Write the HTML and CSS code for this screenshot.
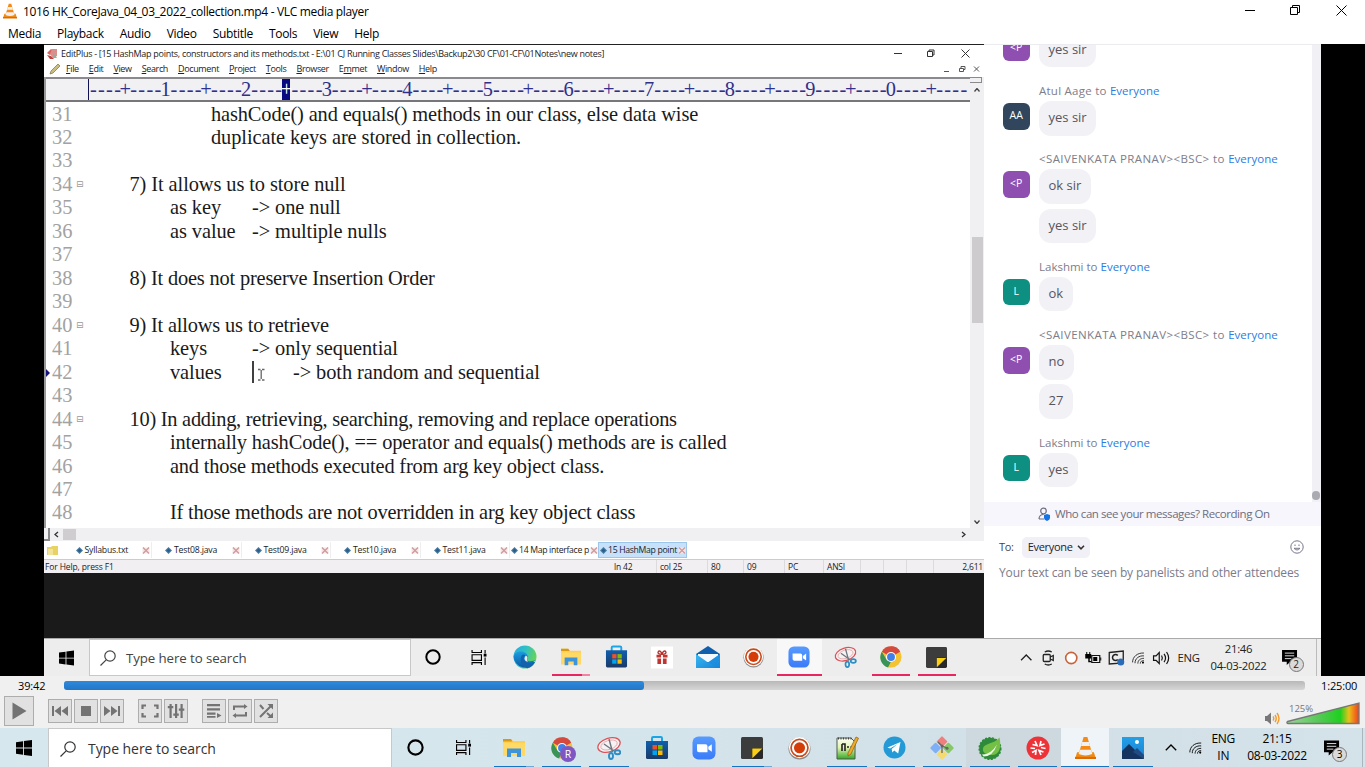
FILE: index.html
```html
<!DOCTYPE html>
<html lang="en">
<head>
<meta charset="utf-8">
<title>1016 HK_CoreJava_04_03_2022_collection.mp4 - VLC media player</title>
<link rel="stylesheet" href="styles.css">
</head>
<body>
<svg class="defs" width="0" height="0">
  <defs>
    <linearGradient id="vol" x1="0" x2="1"><stop offset="0" stop-color="#9ad49a"/><stop offset=".45" stop-color="#55c955"/><stop offset=".74" stop-color="#1fd01f"/><stop offset=".86" stop-color="#e8c21c"/><stop offset=".95" stop-color="#f36a1a"/><stop offset="1" stop-color="#e8431a"/></linearGradient>
    <linearGradient id="edgeA" x1="0" y1="0" x2="1" y2=".4"><stop offset="0" stop-color="#27a9e0"/><stop offset=".5" stop-color="#2fc0c6"/><stop offset="1" stop-color="#67d35a"/></linearGradient>
    <linearGradient id="edgeB" x1="0" y1="0" x2="0" y2="1"><stop offset="0" stop-color="#1b9de2"/><stop offset="1" stop-color="#0c59a4"/></linearGradient>
    <linearGradient id="storeG" x1="0" y1="0" x2="0" y2="1"><stop offset="0" stop-color="#0f5fae"/><stop offset="1" stop-color="#1a3a66"/></linearGradient>
    <linearGradient id="zoomG" x1="0" y1="0" x2="0" y2="1"><stop offset="0" stop-color="#579bff"/><stop offset="1" stop-color="#3a7bf8"/></linearGradient>
    <linearGradient id="mailG" x1="0" y1="0" x2="1" y2="1"><stop offset="0" stop-color="#3ab8f2"/><stop offset="1" stop-color="#1583d8"/></linearGradient>
    <linearGradient id="photoG" x1="0" y1="0" x2="0" y2="1"><stop offset="0" stop-color="#22a0e8"/><stop offset="1" stop-color="#1b7fd0"/></linearGradient>
    <linearGradient id="nppG" x1="0" y1="0" x2="0" y2="1"><stop offset="0" stop-color="#fbfdf5"/><stop offset=".45" stop-color="#e3f3b4"/><stop offset="1" stop-color="#35a923"/></linearGradient>
    <symbol id="win" viewBox="0 0 16 16"><path d="M0 2.2 7 1.2v6.4H0zM7.9 1.1 16 0v7.6H7.9zM0 8.4h7v6.4L0 13.8zM7.9 8.4H16V16l-8.1-1.1z"/></symbol>
    <symbol id="search" viewBox="0 0 16 16"><g fill="none" stroke="currentColor" stroke-width="1.2"><circle cx="10" cy="6" r="5.2"/><path d="M6.2 9.8.5 15.5"/></g></symbol>
    <symbol id="ring" viewBox="0 0 16 16"><circle cx="8" cy="8" r="6.7" fill="none" stroke="currentColor" stroke-width="2"/></symbol>
    <symbol id="taskview" viewBox="0 0 16 16"><path d="M.6 0v2.6h10V0M.6 16v-2.6h10V16M.6 5h10v6H.6zM14.5 0v3.8M14.5 8v8" fill="none" stroke="currentColor" stroke-width="1.2"/><path d="M13 4h3v3h-3z"/></symbol>
    <symbol id="edge" viewBox="0 0 24 24"><circle cx="12" cy="12" r="11.5" fill="url(#edgeA)"/><path d="M.6 11.5C2 7 6 6 9 6.6c4.500.8 6 4 6 6 0 1-.6 1.500-1 2.200-.5 1 3 2.300 7.500.7.8-.3 1.200.3.6 1.200A11.500 11.500 0 0 1 .6 11.500z" fill="url(#edgeB)"/><path d="M24 12.500c0 3-2.500 4.500-5 4.500l3.200 0z" fill="#ececec"/><path d="M9 10c-2.500 4-1.500 11 5.200 13.200A11 11 0 0 0 22 17c-5 2.700-9.500 1-10.800-1.700C10 13 11 11 12.500 10.500 11 9 9.800 9.200 9 10z" fill="#1461ac"/><path d="M12.800 10.800c1.600.5 2 2 1.400 3.200-.5 1-.3 2 1.200 2.500-3 .5-5.400-2.500-2.600-5.700z" fill="#ececec"/></symbol>
    <symbol id="folder" viewBox="0 0 22 20"><path d="M0 1h8l2 2h12v15H0z" fill="#ffcf52"/><path d="M0 1h8l1.500 2.500H0z" fill="#d99a11"/><path d="M0 5h22v13H0z" fill="#ffd966"/><path d="M4 10.500h14V19h-4v-4H8v4H4z" fill="#3d94da"/></symbol>
    <symbol id="store" viewBox="0 0 24 24"><path d="M7 6V2.200C7 1.500 7.500 1 8.200 1h7.600c.7 0 1.200.5 1.200 1.200V6" fill="none" stroke="#1aa5e8" stroke-width="2"/><path d="M1 5h22v16.500A1.500 1.500 0 0 1 21.500 23h-19A1.500 1.500 0 0 1 1 21.500z" fill="url(#storeG)"/><path d="M7.500 9H12v4.500H7.500z" fill="#f25022"/><path d="M13 9h4.500v4.500H13z" fill="#7fba00"/><path d="M7.500 14.500H12V19H7.500z" fill="#00a4ef"/><path d="M13 14.500h4.500V19H13z" fill="#ffb900"/></symbol>
    <symbol id="gift" viewBox="0 0 24 24"><path d="M0 0h24v24H0z" fill="#fff"/><path d="M6 9h12v3H6zM7 13h10v6H7z" fill="#c13531"/><path d="M11 9h2v10h-2z" fill="#fff"/><path d="M12 8.500C8 8.500 7 7 8 5.500s3.500 0 4 3c.5-3 3-4.500 4-3s0 3-4 3z" fill="none" stroke="#b5302c" stroke-width="1.500"/></symbol>
    <symbol id="mail" viewBox="0 0 24 22"><path d="M0 8 12 0l12 8v13H0z" fill="#0f5fae"/><path d="M2 8h20v8H2z" fill="#f4f9ff"/><path d="M0 8l12 8.500L24 8v14H0z" fill="url(#mailG)"/><path d="M12 16.500 24 8v14z" fill="#1a8be0" opacity=".6"/></symbol>
    <symbol id="record" viewBox="0 0 24 24"><circle cx="12" cy="12.500" r="11.500" fill="#8c8987"/><circle cx="12" cy="11.600" r="11" fill="#fff"/><circle cx="12" cy="11.800" r="8.800" fill="#fff" stroke="#c84b1d" stroke-width="1.800"/><circle cx="12" cy="11.800" r="5.800" fill="#d43d08"/></symbol>
    <symbol id="zoomapp" viewBox="0 0 24 24"><rect x=".5" y=".5" width="23" height="23" rx="6" fill="url(#zoomG)"/><path d="M5 8.200h8.500a2 2 0 0 1 2 2v6H7a2 2 0 0 1-2-2zM16.300 10.800l3.500-2.500v7.500l-3.500-2.500z" fill="#fff"/></symbol>
    <symbol id="snip" viewBox="0 0 24 24"><ellipse cx="12" cy="9" rx="11.500" ry="6.800" transform="rotate(-18 12 9)" fill="#f6f2f3" stroke="#dc5258" stroke-width="1.300"/><ellipse cx="12" cy="9" rx="8.500" ry="4.500" transform="rotate(-18 12 9)" fill="none" stroke="#e0a3a6" stroke-width=".8"/><path d="M12 3l3.500 13M7 8l10 7" stroke="#6c7780" stroke-width="1.400"/><g fill="none" stroke="#2c8ec4" stroke-width="1.900"><ellipse cx="14" cy="20" rx="2" ry="3"/><ellipse cx="20.500" cy="16.300" rx="2.800" ry="2"/></g></symbol>
    <symbol id="chrome" viewBox="0 0 24 24"><circle cx="12" cy="12" r="11.500" fill="#f4c334"/><path d="M12 12 2 6.200A11.500 11.500 0 0 1 22 6.200z" fill="#d54a3e"/><path d="M12 .5A11.500 11.500 0 0 1 22 6.400H12z" fill="#d54a3e"/><path d="M2 6.300 7.200 15 12 17.500l-3 6A11.500 11.500 0 0 1 2 6.300z" fill="#3a9457"/><path d="m9 23 5-9 3-2-5 11.500z" fill="#f4c334"/><circle cx="12" cy="12" r="5.500" fill="#fff"/><circle cx="12" cy="12" r="4.300" fill="#4180e8"/></symbol>
    <symbol id="sticky" viewBox="0 0 22 22"><path d="M0 1.500Q0 0 1.500 0h19Q22 0 22 1.500V12L12 22H1.500Q0 22 0 20.500z" fill="#3c3c3c"/><path d="M11 22V11h11v9.500Q22 22 20.500 22z" fill="#292929"/><path d="M11.300 11.500h10L11.300 21.300z" fill="#fbd012"/></symbol>
    <symbol id="cone" viewBox="0 0 20 22"><path d="M2 15h16l2 6.500H0z" fill="#f28a12"/><path d="M0 19.500h20v2H0z" fill="#d96c08"/><path d="M8.200.5h3.600l4.700 16.300q-6.500 2.500-13 0z" fill="#f58b16"/><path d="M6.800 5.200h6.400l1.100 3.900H5.700zM4.700 12.700h10.600l1.200 4.100q-6.500 2.500-13 0z" fill="#eef0f1"/></symbol>
    <symbol id="wifi" viewBox="0 0 16 16"><g fill="none" stroke="currentColor" stroke-width="1.100"><path d="M1 14C1 7 7 2 15 2.500M4 15c0-6 5-9.500 11-9M7.500 15.500c0-4 3-6.500 7.500-6.500M10.500 15.500c0-2.500 2-4 4.500-3.500"/></g><circle cx="13.800" cy="14.300" r="1.300"/></symbol>
    <symbol id="caret" viewBox="0 0 12 7"><path d="M.8 6.300 6 1l5.200 5.300" fill="none" stroke="currentColor" stroke-width="1.300"/></symbol>
    <symbol id="notice" viewBox="0 0 17 16"><path d="M0 0h16v12.500H9L5 16v-3.500H0z"/><path d="M3 3.300h10M3 6.200h10M3 9.200h7" stroke="#e6e9eb" stroke-width="1"/></symbol>
    <symbol id="dot" viewBox="0 0 7 7"><path d="M3.500 0 7 3.500 3.500 7 0 3.500z" fill="#4a7ba2"/><path d="M3.500 1.500 5.500 3.500 3.500 5.500 1.500 3.500z" fill="#2a5e88"/></symbol>
    <symbol id="cross" viewBox="0 0 8 7"><path d="M.5.500h7v6h-7z" fill="#f4e6e6"/><path d="m1 .5 6 6m0-6-6 6" stroke="#cf989b" stroke-width="1.200"/></symbol>
  </defs>
</svg>

<header class="titlebar">
  <svg class="app-cone" width="14" height="16"><use href="#cone"/></svg>
  <span class="window-title">1016 HK_CoreJava_04_03_2022_collection.mp4 - VLC media player</span>
  <svg class="window-buttons" width="102" height="12" viewBox="0 0 102 12" fill="none" stroke="#000"><path d="M0 6.500h10M45.500 3.500h7v7h-7zM47.500 3.500v-2h7v7h-2M91.500 1.500l10 10m0-10-10 10"/></svg>
</header>
<nav class="menubar"><span>Media</span><span>Playback</span><span>Audio</span><span>Video</span><span>Subtitle</span><span>Tools</span><span>View</span><span>Help</span></nav>

<main class="video">
  <div class="desktop">
    <div class="workspace">
      <section class="share">
        <div class="editor">
          <div class="ed-title">
            <svg width="12" height="11" viewBox="0 0 12 11"><path d="M1 5 5 1l3 2-4 4z" fill="#d9605c"/><path d="M6 1h5v7l-4 2-3-4z" fill="#d98f8a"/><path d="M1 7l4 1 3 3H4z" fill="#b8433f"/><path d="M8 6l3 4H7z" fill="#8ab39a"/></svg>
            <span>EditPlus - [15 HashMap points, constructors and its methods.txt - E:\01 CJ Running Classes Slides\Backup2\30 CF\01-CF\01Notes\new notes]</span>
            <svg class="ed-buttons" width="76" height="9" viewBox="0 0 76 9" fill="none" stroke="#333"><path d="M0 4.500h8M33.500 2.500h5v5h-5zM35 2.500v-1.500h5V6h-1.500M67.500.500l8 8m0-8-8 8"/></svg>
          </div>
          <div class="ed-menu">
            <svg width="12" height="12" viewBox="0 0 12 12"><path d="M1 11 2 8 9 1l2 2-7 7z" fill="#c9bd82" stroke="#8a8055" stroke-width=".8"/></svg>
            <span><u>F</u>ile</span><span><u>E</u>dit</span><span><u>V</u>iew</span><span><u>S</u>earch</span><span><u>D</u>ocument</span><span><u>P</u>roject</span><span><u>T</u>ools</span><span><u>B</u>rowser</span><span>E<u>m</u>met</span><span><u>W</u>indow</span><span><u>H</u>elp</span>
            <svg class="mdi" width="36" height="8" viewBox="0 0 36 8" fill="none" stroke="#555"><path d="M0 6.500h5M15.500 3.500h4v3h-4zM17 3V1.500h4v3h-1M30 1.500l5 5m0-5-5 5"/></svg>
          </div>
          <div class="ed-main">
            <div class="ed-left">
              <div class="ruler"><span class="ruler-gutter"></span><i>----</i><b>+</b><i>----</i><b>1</b><i>----</i><b>+</b><i>----</i><b>2</b><i>----</i><b class="on">+</b><i>----</i><b>3</b><i>----</i><b>+</b><i>----</i><b>4</b><i>----</i><b>+</b><i>----</i><b>5</b><i>----</i><b>+</b><i>----</i><b>6</b><i>----</i><b>+</b><i>----</i><b>7</b><i>----</i><b>+</b><i>----</i><b>8</b><i>----</i><b>+</b><i>----</i><b>9</b><i>----</i><b>+</b><i>----</i><b>0</b><i>----</i><b>+</b><i>----</i></div>
              <div class="lines">
                <div class="line"><em>31</em><p class="t3 snug">hashCode() and equals() methods in our class, else data wise</p></div>
                <div class="line"><em>32</em><p class="t3">duplicate keys are stored in collection.</p></div>
                <div class="line"><em>33</em></div>
                <div class="line fold"><em>34</em><p class="t1">7) It allows us to store null</p></div>
                <div class="line"><em>35</em><p class="t2"><span class="key">as key</span>-&gt; one null</p></div>
                <div class="line"><em>36</em><p class="t2"><span class="key">as value</span>-&gt; multiple nulls</p></div>
                <div class="line"><em>37</em></div>
                <div class="line"><em>38</em><p class="t1 tighter">8) It does not preserve Insertion Order</p></div>
                <div class="line"><em>39</em></div>
                <div class="line fold"><em>40</em><p class="t1 tighter">9) It allows us to retrieve</p></div>
                <div class="line"><em>41</em><p class="t2"><span class="key">keys</span>-&gt; only sequential</p></div>
                <div class="line current"><em>42</em><p class="t2"><span class="key">values</span><span class="caret-cell"><svg width="14" height="22" viewBox="0 0 14 22" fill="none"><path d="M1 0v22" stroke="#111" stroke-width="1.600"/><path d="M6 8.500h2.500M10 8.500h2.500M9.200 9v9M6 19h2.500M10 19h2.500" stroke="#666" stroke-width="1.300"/></svg></span>-&gt; both random and sequential</p></div>
                <div class="line"><em>43</em></div>
                <div class="line fold"><em>44</em><p class="t1 tightest">10) In adding, retrieving, searching, removing and replace operations</p></div>
                <div class="line"><em>45</em><p class="t2 snug">internally hashCode(), == operator and equals() methods are is called</p></div>
                <div class="line"><em>46</em><p class="t2 tighter">and those methods executed from arg key object class.</p></div>
                <div class="line"><em>47</em></div>
                <div class="line"><em>48</em><p class="t2 tighter">If those methods are not overridden in arg key object class</p></div>
              </div>
            </div>
            <div class="vscroll"><div class="split"></div><svg width="6" height="4" viewBox="0 0 6 4" fill="none" stroke="#444" stroke-width="1.300"><path d="m.5 3.500 2.500-3 2.500 3"/></svg><div class="vthumb"></div><svg class="down" width="6" height="4" viewBox="0 0 6 4" fill="none" stroke="#444" stroke-width="1.300"><path d="m.5.500 2.500 3 2.500-3"/></svg></div>
          </div>
          <div class="hscroll"><span class="hcorner"></span><svg width="5" height="7" viewBox="0 0 5 7" fill="none" stroke="#333" stroke-width="1.300"><path d="M4 1 1 3.500 4 6"/></svg><div class="hthumb"></div><svg class="right" width="5" height="7" viewBox="0 0 5 7" fill="none" stroke="#333" stroke-width="1.300"><path d="m1 1 3 2.500L1 6"/></svg></div>
          <div class="ed-tabs">
            <div class="dirbtn"><svg width="11" height="11" viewBox="0 0 11 11"><path d="M0 2h4l1-1h6v9H0z" fill="#e9d264"/><path d="M1 4h5v6H1z" fill="#f2e39b"/></svg></div>
            <div class="tab"><svg><use href="#dot"/></svg><span>Syllabus.txt</span><svg><use href="#cross"/></svg></div>
            <div class="tab"><svg><use href="#dot"/></svg><span>Test08.java</span><svg><use href="#cross"/></svg></div>
            <div class="tab"><svg><use href="#dot"/></svg><span>Test09.java</span><svg><use href="#cross"/></svg></div>
            <div class="tab"><svg><use href="#dot"/></svg><span>Test10.java</span><svg><use href="#cross"/></svg></div>
            <div class="tab"><svg><use href="#dot"/></svg><span>Test11.java</span><svg><use href="#cross"/></svg></div>
            <div class="tab tight"><svg><use href="#dot"/></svg><span>14 Map interface p</span><svg><use href="#cross"/></svg></div>
            <div class="tab tight active"><svg><use href="#dot"/></svg><span>15 HashMap point</span><svg><use href="#cross"/></svg></div>
          </div>
          <div class="ed-status"><span class="help">For Help, press F1</span><span class="s1">ln 42</span><span class="s2">col 25</span><span class="s3">80</span><span class="s4">09</span><span class="s5">PC</span><span class="s6">ANSI</span><span class="s7"></span><span class="s7"></span><span class="s8"></span><span class="s9">2,611</span></div>
        </div>
      </section>
      <aside class="chat">
        <div class="messages">
          <div class="group"><div class="avatar purple">&lt;P</div><div class="who"></div><div class="bubble">yes sir</div></div>
          <div class="group"><div class="avatar navy">AA</div><div class="who wide">Atul Aage to <a>Everyone</a></div><div class="bubble">yes sir</div></div>
          <div class="group"><div class="avatar purple">&lt;P</div><div class="who caps">&lt;SAIVENKATA PRANAV&gt;&lt;BSC&gt; to <a>Everyone</a></div><div class="bubble">ok sir</div><div class="bubble">yes sir</div></div>
          <div class="group"><div class="avatar teal">L</div><div class="who">Lakshmi to <a>Everyone</a></div><div class="bubble">ok</div></div>
          <div class="group"><div class="avatar purple">&lt;P</div><div class="who caps">&lt;SAIVENKATA PRANAV&gt;&lt;BSC&gt; to <a>Everyone</a></div><div class="bubble">no</div><div class="bubble">27</div></div>
          <div class="group"><div class="avatar teal">L</div><div class="who">Lakshmi to <a>Everyone</a></div><div class="bubble">yes</div></div>
          <div class="track"><span></span></div>
        </div>
        <div class="notice"><svg width="13" height="14" viewBox="0 0 13 14"><g fill="none" stroke="#6d6d80" stroke-width="1.200"><circle cx="5.500" cy="4" r="2.800"/><path d="M1 12c0-3 2-4.500 4.500-4.500M1 12h5"/></g><path d="m9 7 3 1v3q0 2-3 3-3-1-3-3V8z" fill="#1473e6"/></svg><span>Who can see your messages? Recording On</span></div>
        <div class="compose">
          <div class="to"><span>To:</span><span class="pill">Everyone<svg width="8" height="5" viewBox="0 0 8 5" fill="none" stroke="#333" stroke-width="1.600"><path d="m1 .8 3 3 3-3"/></svg></span><svg class="smile" width="14" height="14" viewBox="0 0 14 14" fill="none" stroke="#77778a"><circle cx="7" cy="7" r="6.200"/><path d="M4 8.300q3 3.400 6 0z"/><path d="M4.500 5.200h1M8.500 5.200h1" stroke-width="1.500"/></svg></div>
          <div class="placeholder">Your text can be seen by panelists and other attendees</div>
        </div>
      </aside>
    </div>
    <div class="taskbar inner">
      <div class="start"><svg width="15" height="16"><use href="#win"/></svg></div>
      <div class="searchbox"><svg width="16" height="16"><use href="#search"/></svg><span>Type here to search</span></div>
      <div class="slot"><svg width="16" height="16"><use href="#ring"/></svg></div>
      <div class="slot"><svg width="16" height="15"><use href="#taskview"/></svg></div>
      <div class="slot"><svg width="24" height="24"><use href="#edge"/></svg></div>
      <div class="slot open more"><svg width="20" height="20"><use href="#folder"/></svg></div>
      <div class="slot"><svg width="23" height="24"><use href="#store"/></svg></div>
      <div class="slot"><svg width="22" height="23"><use href="#gift"/></svg></div>
      <div class="slot"><svg width="24" height="22"><use href="#mail"/></svg></div>
      <div class="slot"><svg width="21" height="22"><use href="#record"/></svg></div>
      <div class="slot open focus"><svg width="22" height="22"><use href="#zoomapp"/></svg></div>
      <div class="slot"><svg width="23" height="22"><use href="#snip"/></svg></div>
      <div class="slot open"><svg width="22" height="22"><use href="#chrome"/></svg></div>
      <div class="slot open"><svg width="21" height="21"><use href="#sticky"/></svg></div>
      <div class="tray">
        <svg width="12" height="7"><use href="#caret"/></svg>
        <svg width="13" height="16" viewBox="0 0 13 16" fill="none" stroke="#222" stroke-width="1.300"><path d="M3 2q3.500-2 7 0M3 14q3.500 2 7 0"/><rect x="1.500" y="4.500" width="7" height="7" rx="1"/><path d="M8.500 7l3-1.500v5L8.500 9"/></svg>
        <svg width="14" height="14" viewBox="0 0 14 14"><circle cx="7" cy="7" r="5.600" fill="#fff" stroke="#c9623a" stroke-width="1.600"/></svg>
        <svg width="16" height="12" viewBox="0 0 16 12"><path d="M6.500 3.500h8v7h-8z" fill="none" stroke="#111" stroke-width="1.200"/><path d="M15 5.500h1v3h-1zM8 5h4v4H8zM0 2h6v4.500H4.500V9H6v1.300H3V6.500H0zM1 0h1v2H1zM4 0h1v2H4z"/></svg>
        <svg width="16" height="16" viewBox="0 0 16 16"><path d="m1 2.500 14-1.500v12L1 14z" fill="none" stroke="#222" stroke-width="1.300"/><path d="M9.500 5.500a3 3 0 1 0 0 4" fill="none" stroke="#222" stroke-width="1.500"/><circle cx="12.500" cy="12" r="3.500" fill="#2a6cb8"/></svg>
        <svg width="13" height="13"><use href="#wifi"/></svg>
        <svg width="17" height="14" viewBox="0 0 17 14" fill="none" stroke="#111" stroke-width="1.200"><path d="M.8 4.800h2.500L6.500 1.500v11L3.300 9.300H.8zM8.800 4.500q1.600 2.500 0 5M11.300 2.800q3 4.200 0 8.400M13.800 1q4.200 6 0 12"/></svg>
        <span class="lang">ENG</span>
        <span class="clock">21:46<br>04-03-2022</span>
        <span class="bell"><svg width="16" height="15"><use href="#notice"/></svg><b>2</b></span>
      </div>
    </div>
  </div>
</main>

<div class="seek"><span class="elapsed">39:42</span><div class="bar"><div class="done"></div></div><span class="total">1:25:00</span></div>
<div class="controls">
  <button class="play"><svg width="15" height="18" viewBox="0 0 15 18"><path d="M.5.500 14.500 9l-14 8.500z"/></svg></button>
  <div class="set">
    <button><svg viewBox="0 0 18 12"><path d="M1 1h2v10H1zM10 1v10L3.500 6zM17 1v10l-6.500-5z"/></svg></button>
    <button><svg viewBox="0 0 18 12"><path d="M4 1h10v10H4z"/></svg></button>
    <button><svg viewBox="0 0 18 12"><path d="M15 1h2v10h-2zM8 1v10l6.500-5zM1 1v10l6.500-5z"/></svg></button>
  </div>
  <div class="set">
    <button><svg viewBox="0 0 18 14" fill="none" stroke="#737373" stroke-width="2.200"><path d="M5 1.500H1.500V5M13 1.500h3.500V5M5 12.500H1.500V9M13 12.500h3.500V9" /></svg></button>
    <button><svg viewBox="0 0 18 14"><path d="M2.500 0h2.200v14H2.500zM8 0h2.200v14H8zM13.500 0h2.200v14h-2.200zM.8 2h5.500v2.200H.8zM6.300 9.500h5.500v2.200H6.300zM11.800 4.500h5.500v2.200h-5.500z"/></svg></button>
  </div>
  <div class="set">
    <button><svg viewBox="0 0 18 14"><path d="M2 0h13v2.200H2zM2 4.200h13v2.200H2zM2 8.500h8.500v2.200H2zM2 12h8.500v1.800H2zM12 9l4.500 2.500L12 14z"/></svg></button>
    <button><svg viewBox="0 0 18 14" fill="none" stroke="#737373" stroke-width="2"><path d="M3 6V2.500h10.500M15 8v3.500H4.500"/><path d="m13 0 3.500 2.500L13 5zM5 9l-3.500 2.500L5 14z" fill="#737373" stroke="none"/></svg></button>
    <button><svg viewBox="0 0 18 14" fill="none" stroke="#737373" stroke-width="2"><path d="M3 1l3.500 4M10 9l4 3.500M3 13 14 2"/><path d="M10.500 0H16v5.500zM16 8.500V14h-5.500z" fill="#737373" stroke="none"/></svg></button>
  </div>
  <div class="volume">
    <svg class="speaker" width="15" height="13" viewBox="0 0 15 13"><path d="M0 4h2L6 .5v12L2 9H0z" fill="#777"/><path d="M8 4.500q1.500 2 0 4M10 3q2.500 3.500 0 7M12 1q4 5.500 0 11" fill="none" stroke="#f39a2b" stroke-width="1.400"/></svg>
    <div class="level"><svg width="74" height="23" viewBox="0 0 74 23"><path d="M1.500 19.500 73 1v20.500H2q-2-.5-.5-2z" fill="url(#vol)" stroke="#777" stroke-width="1.300"/></svg><span>125%</span></div>
  </div>
</div>

<footer class="taskbar outer">
  <div class="start"><svg width="16" height="16"><use href="#win"/></svg></div>
  <div class="searchbox"><svg width="16" height="16"><use href="#search"/></svg><span>Type here to search</span></div>
  <div class="slot"><svg width="17" height="17"><use href="#ring"/></svg></div>
  <div class="slot"><svg width="17" height="15"><use href="#taskview"/></svg></div>
  <div class="slot open more first"><svg width="22" height="20"><use href="#folder"/></svg></div>
  <div class="slot open"><svg class="profile" width="25" height="25" viewBox="0 0 25 25"><use href="#chrome" width="22" height="22"/><circle cx="17" cy="17" r="8" fill="#7e57c2"/><text x="17" y="21" text-anchor="middle">R</text></svg></div>
  <div class="slot open"><svg width="24" height="24"><use href="#snip"/></svg></div>
  <div class="slot"><svg width="24" height="24"><use href="#store"/></svg></div>
  <div class="slot"><svg width="24" height="24"><use href="#zoomapp"/></svg></div>
  <div class="slot open more"><svg width="22" height="22"><use href="#sticky"/></svg></div>
  <div class="slot"><svg width="23" height="24"><use href="#record"/></svg></div>
  <div class="slot open"><svg width="24" height="24" viewBox="0 0 24 24"><path d="M2 2h14l4 4v17H2z" fill="url(#nppG)" stroke="#4d5a4a"/><path d="M3 2.500h14" stroke="#444" stroke-dasharray="1 1.500" stroke-width="2"/><path d="M7 8v7M7 8h3v7M12 11h2M15.500 11h2" stroke="#222" stroke-width="1.600" fill="none"/><path d="m13 17 8-16 2.500 1.200L16 18l-3 2z" fill="#f0ab25" stroke="#8a5a1b" stroke-width=".7"/></svg></div>
  <div class="slot open"><svg width="23" height="23" viewBox="0 0 23 23"><circle cx="11.500" cy="11.500" r="11" fill="#239ad6"/><path d="m4.500 11.500 13-5.500-2.300 11.500-4-3-1.800 2-.8-3.500 6-5-7.500 4.500z" fill="#fff"/></svg></div>
  <div class="slot open"><svg width="24" height="24" viewBox="0 0 24 24"><g transform="rotate(45 12 12)"><rect x="3.500" y="3.500" width="8" height="8" rx="1" fill="#ef7f7c"/><rect x="12.500" y="3.500" width="8" height="8" rx="1" fill="#86c766"/><rect x="3.500" y="12.500" width="8" height="8" rx="1" fill="#7fb0f5"/><rect x="12.500" y="12.500" width="8" height="8" rx="1" fill="#f5da70"/></g><path d="M8 6l4 4v7M12 10l5 2" stroke="#666" fill="none" stroke-width="1.300"/><circle cx="12" cy="10" r="1.500" fill="#666"/><circle cx="17" cy="12.200" r="1.500" fill="#666"/></svg></div>
  <div class="slot open tinted"><svg width="24" height="24" viewBox="0 0 24 24"><circle cx="12" cy="12.500" r="10.800" fill="#2f8b3b" stroke="#2f8b3b" stroke-width="1.500" stroke-dasharray="2 1.500"/><path d="M21.500 1.500c2 9 .5 18-8.500 17.500-6 0-8.500-3-8-6.500.7-5.500 11-4 16.500-11z" fill="#74c046"/><path d="M4 18.500q9 0 15-10-4 12-13.500 12z" fill="#eaf7e2"/></svg></div>
  <div class="slot open tinted"><svg width="24" height="24" viewBox="0 0 24 24"><circle cx="12" cy="12" r="11.500" fill="#ee3338"/><g fill="none" stroke="#fff" stroke-width="1.700"><path d="M9 5l2 4.500-4.500-1M15 5l-1 4.500L18.500 8M19.500 12.500 15 11.500M4.500 12l4.500.5M9.500 19l.5-4.500L6 16.500M15 19l-2-4.500 4.500 1.500"/></g></svg></div>
  <div class="slot open focus"><svg width="21" height="24"><use href="#cone"/></svg></div>
  <div class="slot open"><svg width="22" height="22" viewBox="0 0 22 22"><path d="M0 0h22v22H0z" fill="url(#photoG)"/><path d="m0 14 7-7 15 15H0z" fill="#15335f"/><path d="m11 15 4-4 7 7v4z" fill="#1f4b85"/><circle cx="15" cy="5" r="2" fill="#fff"/></svg></div>
  <div class="tray">
    <svg width="12" height="7"><use href="#caret"/></svg>
    <svg width="13" height="13"><use href="#wifi"/></svg>
    <span class="lang">ENG<br>IN</span>
    <span class="clock">21:15<br>08-03-2022</span>
    <span class="bell"><svg width="16" height="16"><use href="#notice"/></svg><b>3</b></span>
  </div>
</footer>
</body>
</html>
```
FILE: styles.css
```css
* { box-sizing: border-box; }
body { margin: 0; width: 1365px; height: 767px; overflow: hidden; background: #fff; color: #000; font: 12px/16px "Open Sans", "Noto Sans", sans-serif; display: flex; flex-direction: column; white-space: nowrap; }
svg { flex: none; display: block; }
.defs { position: absolute; }
p, em, i, b { margin: 0; font-style: normal; font-weight: normal; }

/* player chrome */
.titlebar { height: 24px; flex: none; display: flex; align-items: center; padding-left: 3px; }
.app-cone { margin-top: -2px; }
.window-title { margin-left: 6px; font-size: 12px; letter-spacing: -0.33px; }
.window-buttons { margin: -4px 18px 0 auto; }
.menubar { height: 20px; flex: none; display: flex; gap: 16px; padding: 2px 0 0 8px; letter-spacing: -0.3px; }

.video { height: 632px; flex: none; background: #000; padding: 0 44px; display: flex; }
.desktop { width: 1277px; display: flex; flex-direction: column; }
.workspace { height: 594px; display: flex; background: #fff; }
.share { width: 940px; background: #1a1a1a; flex: none; }

/* editor */
.editor { height: 529px; background: #fff; border-top: 1px solid #222; display: flex; flex-direction: column; font-size: 9px; line-height: 12px; color: #222; }
.ed-title { height: 16px; flex: none; display: flex; align-items: center; padding: 1px 14px 0 2px; letter-spacing: -0.29px; }
.ed-title span { margin-left: 3px; }
.ed-buttons { margin-left: auto; }
.ed-menu { height: 16px; flex: none; display: flex; align-items: center; padding: 0 4px 0 5px; gap: 10px; letter-spacing: -0.36px; }
.ed-menu svg:first-child { margin-right: -5px; }
.ed-menu .mdi { margin-left: auto; }
.ed-main { height: 451px; flex: none; display: flex; }
.ed-left { width: 926px; border-left: 2px solid #999; overflow: hidden; }
.ruler { height: 25px; background: #f1f0f3; border-top: 2px solid #8a8a8e; border-bottom: 2px solid #77777b; display: flex; font: 20.400px/20px "Liberation Serif", serif; color: #30308a; }
.ruler-gutter { width: 43px; flex: none; border-right: 1px solid #111155; }
.ruler i { width: 32.250px; padding-left: 1px; flex: none; letter-spacing: 1.270px; overflow: visible; }
.ruler b { width: 8.060px; flex: none; display: flex; justify-content: center; }
.ruler .on { background: #0a0a80; color: #fff; }
.lines { padding-top: 0.500px; font: 20.400px/23.470px "Liberation Serif", serif; color: #1a1a1a; }
.line { height: 23.470px; display: flex; position: relative; }
.line em { width: 43px; padding-left: 6px; flex: none; color: #a2a2a2; }
.line p { letter-spacing: -0.09px; }
.line .snug { letter-spacing: -0.13px; }
.line .tighter { letter-spacing: -0.19px; }
.line .tightest { letter-spacing: -0.25px; }
.fold::before { content: "⊟"; position: absolute; left: 30px; top: 0; font-size: 9px; color: #999; font-family: "DejaVu Sans", sans-serif; }
.current::before { content: ""; position: absolute; left: 0; top: 8px; border: 4px solid transparent; border-left-color: #15157c; border-right: 0; }
.t1 { padding-left: 40.500px; }
.t2 { padding-left: 81px; }
.t3 { padding-left: 122px; }
.key { display: inline-block; width: 82px; }
.caret-cell { display: inline-block; width: 41px; height: 20px; vertical-align: top; }
.vscroll { width: 14px; background: #f0eff1; display: flex; flex-direction: column; align-items: center; }
.split { width: 12px; height: 6px; border: 1px solid #8a8a8e; border-left: 0; margin-bottom: 5px; align-self: flex-start; flex: none; }
.vthumb { margin-top: 145px; width: 11px; height: 86px; background: #cdcbcd; flex: none; }
.down { margin-top: auto; margin-bottom: 4px; }
.hscroll { height: 13px; flex: none; background: #f0eff1; display: flex; align-items: center; padding-right: 18px; }
.hcorner { width: 6px; height: 13px; border: 2px solid #888; border-top: 0; border-left: 0; margin-right: 4px; }
.hthumb { width: 13px; height: 11px; margin-left: 4px; background: #cfcdd0; }
.right { margin-left: auto; }
.ed-tabs { height: 18px; flex: none; display: flex; background: #fff; align-items: center; }
.dirbtn { width: 18.500px; padding-left: 3px; flex: none; }
.tab { width: 89.500px; height: 16px; flex: none; display: flex; align-items: center; padding-left: 13px; gap: 2px; font-size: 8.700px; letter-spacing: -0.2px; border-right: 1px solid #eee; }
.tab svg:first-child { width: 7px; height: 7px; }
.tab svg:last-child { width: 8px; height: 7px; margin-left: auto; margin-right: 1px; }
.tab.tight { padding-left: 1px; border: 0; width: 88px; letter-spacing: -0.33px; gap: 1px; }
.tab.tight svg:last-child { margin-right: 0; }
.tab.active { background: #c7e1fa; border: 1px solid #9cc6ea; width: 89px; }
.ed-status { height: 14px; flex: none; background: #f1eff2; border-top: 1px solid #ccc; display: flex; font-size: 8.500px; line-height: 14px; letter-spacing: -0.2px; }
.ed-status span { flex: none; padding-left: 3px; border-left: 1px solid #dcdadd; }
.ed-status .help { width: 565px; padding-left: 1px; border: 0; letter-spacing: -0.12px; }
.ed-status .s1 { width: 47px; border: 0; padding-left: 5px; }
.ed-status .s2 { width: 51px; }
.ed-status .s3 { width: 36px; }
.ed-status .s4 { width: 41px; }
.ed-status .s5 { width: 39px; }
.ed-status .s6 { width: 37px; }
.ed-status .s7 { width: 23px; }
.ed-status .s8 { width: 27px; }
.ed-status .s9 { flex: 1; text-align: right; padding-right: 1px; }

/* meeting chat */
.chat { width: 337px; display: flex; flex-direction: column; background: #fff; }
.messages { height: 458px; flex: none; overflow: hidden; position: relative; display: flex; flex-direction: column; justify-content: flex-end; padding-bottom: 15px; border-top: 1px solid #ececf0; }
.group { display: grid; grid-template-columns: 36px auto; justify-content: start; justify-items: start; padding: 13.900px 0 0 19px; flex: none; }
.who { grid-column: 2; grid-row: 1; height: 20px; line-height: 20px; font-size: 11.500px; color: #7d7d8c; }
.who a { color: #2a7de1; letter-spacing: 0; }
.who.wide { letter-spacing: 0.250px; }
.who.caps { letter-spacing: 0.400px; }
.avatar { grid-column: 1; grid-row: 2; width: 26.500px; height: 26.500px; margin-top: 2px; border-radius: 6px; color: #fff; text-align: center; font-size: 10.500px; line-height: 25px; }
.bubble { grid-column: 2; height: 34.400px; line-height: 32.500px; padding: 0 9.500px; border-radius: 12px; background: #f2f1f6; color: #55555f; font-size: 13px; }
.bubble + .bubble { margin-top: 4.800px; }
.purple { background: #8e4fb0; }
.navy { background: #31465c; }
.teal { background: #0d9082; }
.track { position: absolute; right: 0; top: 0; bottom: 0; width: 9px; background: #f1f0f5; }
.track span { position: absolute; left: 0; bottom: 2px; width: 8px; height: 9px; border-radius: 4px; background: #aaaab2; }
.notice { height: 24px; flex: none; background: #f6f6fc; display: flex; align-items: center; gap: 4px; padding: 0 0 1px 54px; color: #6d6d7c; font-size: 11.500px; letter-spacing: -0.44px; }
.compose { padding: 9px 17px 0 15px; }
.to { display: flex; align-items: center; height: 24px; font-size: 11px; color: #444; letter-spacing: -0.3px; }
.pill { margin-left: 8px; width: 68px; height: 21px; border-radius: 5px; background: #f1f0f6; padding-left: 6px; display: flex; align-items: center; gap: 4px; color: #222230; }
.smile { margin-left: auto; }
.placeholder { height: 26px; line-height: 27px; font-size: 12px; color: #7b7b8c; letter-spacing: -0.13px; }

/* taskbars */
.taskbar { display: flex; align-items: stretch; flex: none; }
.inner { height: 38px; background: #ededed; border-top: 1px solid #aaa; }
.start { display: flex; align-items: center; justify-content: center; }
.inner .start { width: 45px; }
.outer .start { width: 48px; }
.searchbox { background: #fff; border: 1px solid #c8c8c8; display: flex; align-items: center; }
.inner .searchbox { width: 321.500px; padding-left: 10px; gap: 10px; font-size: 13.300px; color: #444; letter-spacing: -0.1px; }
.outer .searchbox { width: 344px; padding-left: 11px; gap: 12px; font-size: 14px; color: #333; border-bottom: 0; letter-spacing: -0.05px; padding-top: 1px; }
.slot { position: relative; display: flex; align-items: center; justify-content: center; flex: none; }
.inner .slot { width: 45.750px; }
.outer .slot { width: 47.600px; }
.outer .first { margin-left: 3px; }
.profile { margin: 3px 0 0 3px; }
.inner .slot svg { margin-top: -1px; }
.slot text { font: 10.500px "Open Sans", sans-serif; fill: #fff; }
.open::after { content: ""; position: absolute; left: 4px; right: 4px; bottom: 0; height: 2px; background: #e8265f; }
.inner .more::after { background: linear-gradient(90deg, #e8265f 80%, #f283a5 80%); }
.outer .open::after { background: #1474c4; height: 1px; }
.outer .more::after { background: linear-gradient(90deg, #1474c4 80%, #6fa9d8 80%); }
.focus::after, .outer .focus::after { left: 0; right: 0; }
.inner .focus { background: #f8f8f8; }
.outer .focus { background: #eef4f8; }
.tinted { background: #cdd9df; }
.tray { flex: 1; display: flex; align-items: center; }
.inner .tray { padding-left: 55px; margin-right: 4px; border-right: 1px solid #bbb; font-size: 11.300px; color: #222; }
.inner .tray > svg { width: 22.500px; }
.inner .lang { margin-left: 5.500px; width: 22px; }
.outer { height: 39px; background: linear-gradient(90deg, #d7e7ee, #d5e5ec 45%, #d2dfe7 75%, #d4e2ea); }
.lang, .clock { text-align: center; letter-spacing: -0.3px; }
.inner .clock { line-height: 17px; width: 56px; margin: -2px 15px 0 11px; }
.bell { position: relative; }
.bell b { position: absolute; left: 7px; top: 7px; width: 15px; height: 15px; border: 1px solid #777; border-radius: 50%; background: #dadada; font-size: 10px; line-height: 13px; text-align: center; letter-spacing: 0; }
.outer .tray { padding-left: 8px; gap: 12px; font-size: 12px; margin-right: 2px; border-right: 1px solid #a9b6bd; }
.outer .lang, .outer .clock { line-height: 17px; margin-top: -1px; }
.outer .lang { margin-left: -2px; }
.outer .clock { width: 60px; }
.outer .bell { margin-left: 5px; }
.outer .bell b { left: 8px; }

/* transport */
.seek { height: 19px; flex: none; background: #f0f0f0; display: flex; align-items: center; font-size: 11px; letter-spacing: -0.15px; }
.elapsed { width: 64px; padding-left: 18px; }
.bar { width: 1241px; height: 9px; border-radius: 3px; background: linear-gradient(#b8b8b8, #d6d6d6); margin-top: -1px; flex: none; }
.done { width: 46.700%; height: 9px; border-radius: 3px; background: linear-gradient(#2f8ada, #2276c8); }
.total { padding-left: 16px; }
.controls { height: 33px; flex: none; background: #f0f0f0; display: flex; align-items: flex-start; padding: 1px 5px 0 4px; gap: 14px; }
.controls button { width: 24px; height: 24px; padding: 0; border: 1px solid #adadad; background: #e1e1e1; display: flex; align-items: center; justify-content: center; fill: #737373; }
.controls button svg { width: 18px; height: 14px; }
.controls .play { width: 30px; height: 30px; }
.controls .play svg { width: 15px; height: 18px; }
.set { display: flex; gap: 2px; padding-top: 3px; }
.volume { margin-left: auto; display: flex; gap: 6px; padding-top: 6px; }
.speaker { margin-top: 10px; }
.level { position: relative; }
.level span { position: absolute; left: 3px; top: -1px; font-size: 9.500px; color: #777; }
```
